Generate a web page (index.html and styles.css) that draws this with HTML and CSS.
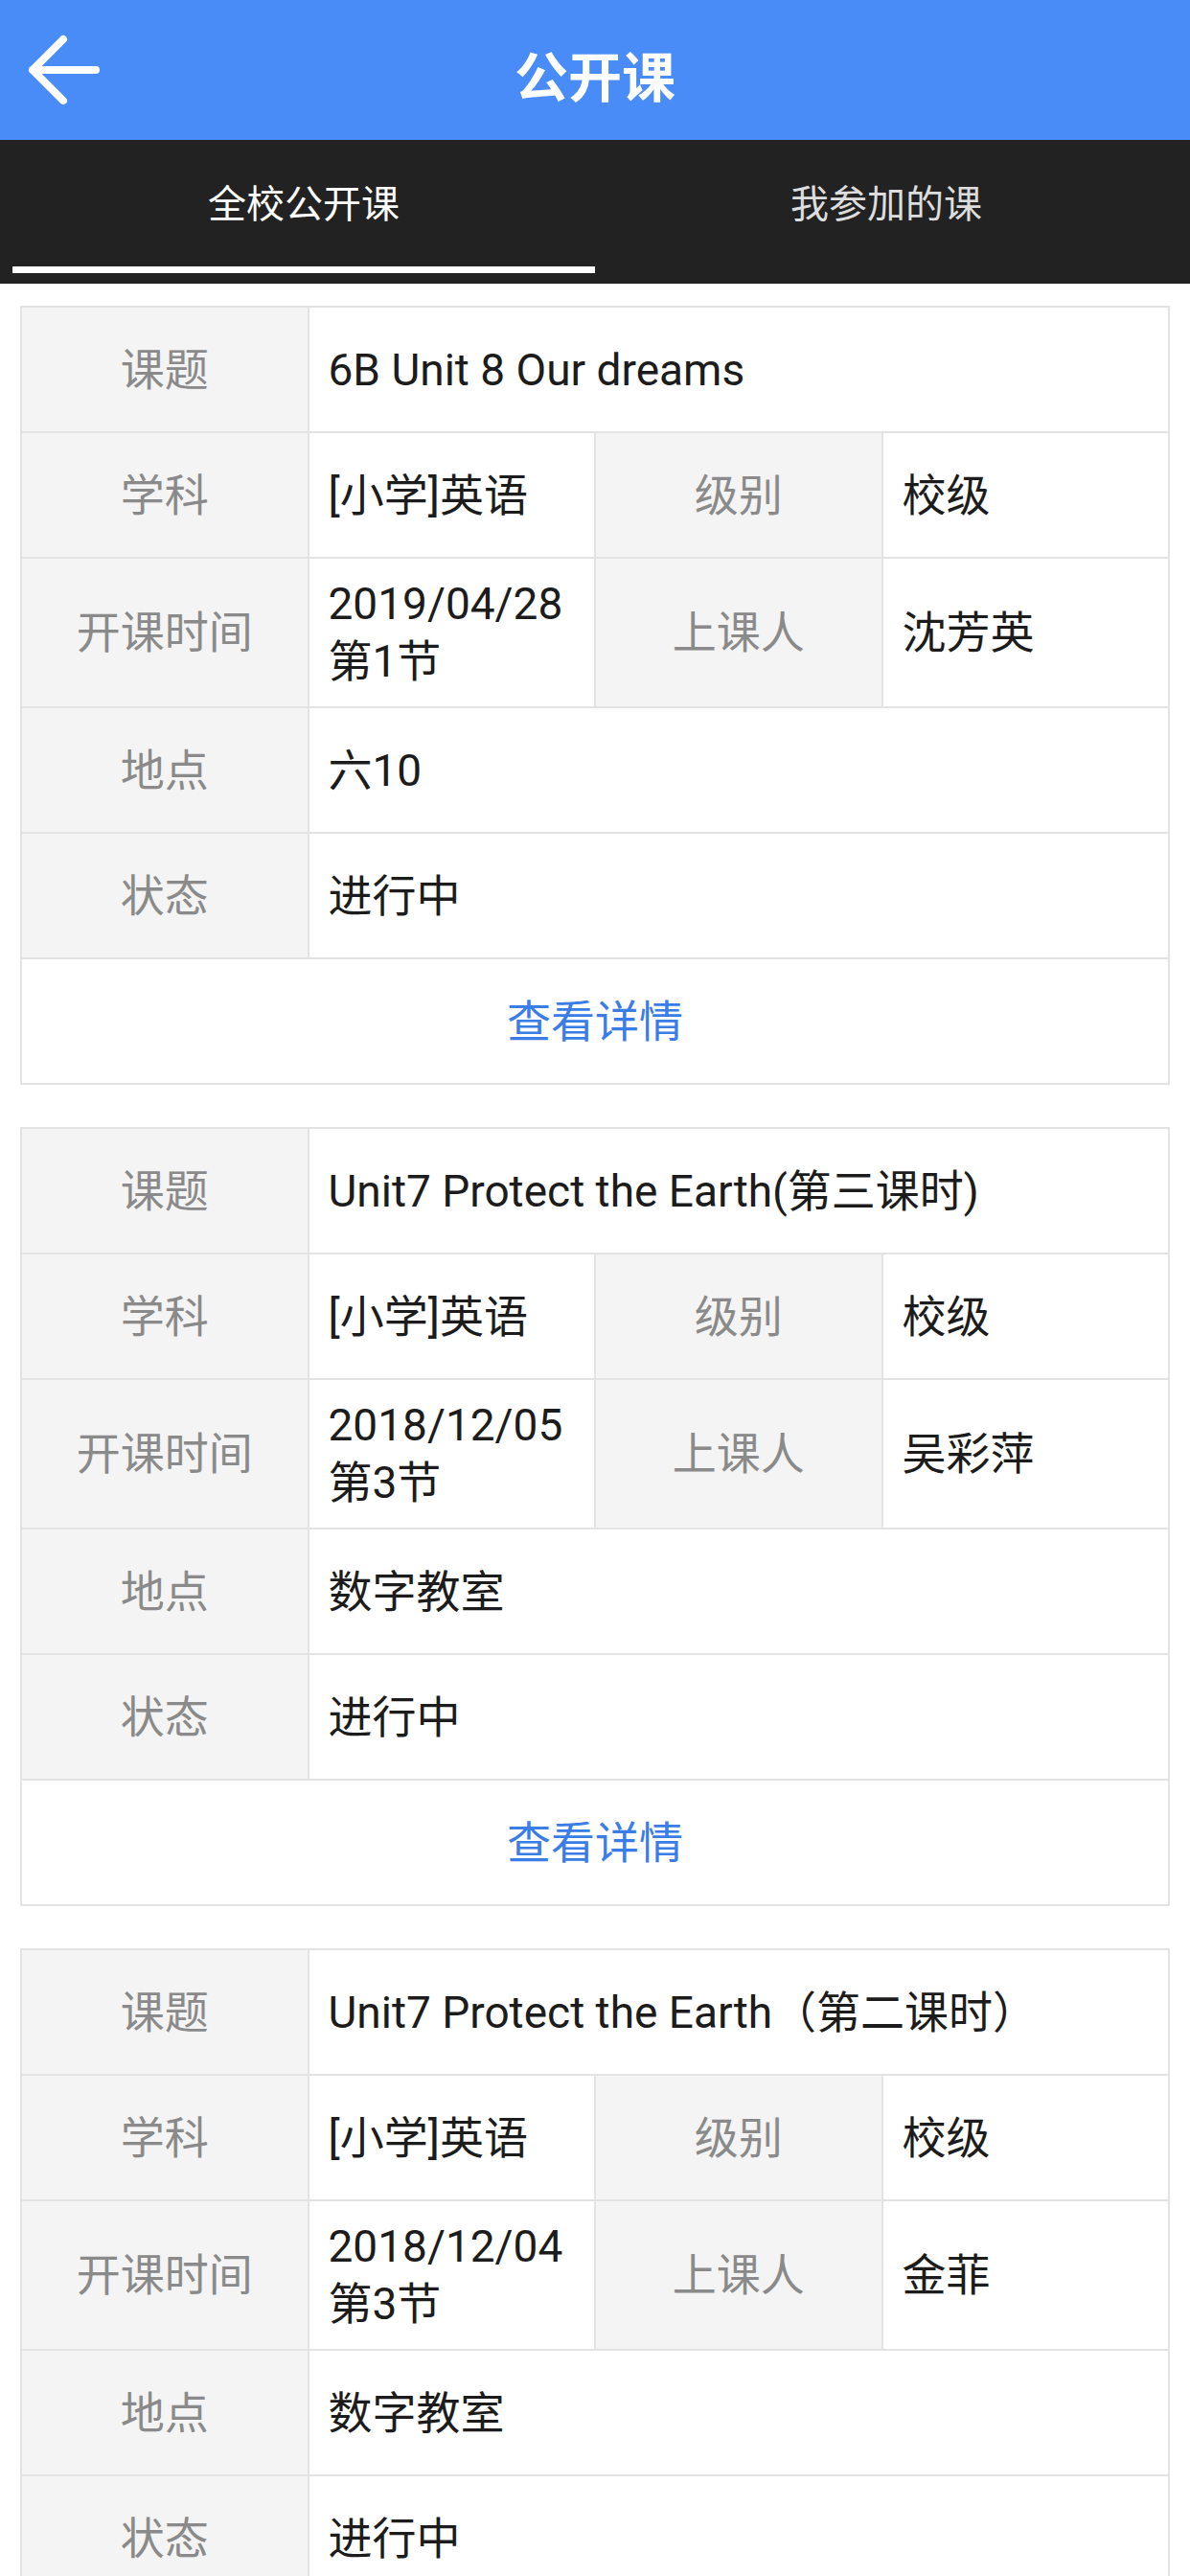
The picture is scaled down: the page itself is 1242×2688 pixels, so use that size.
FILE: index.html
```html
<!DOCTYPE html>
<html lang="zh-CN">
<head>
  <meta charset="UTF-8">
  <meta name="viewport" content="width=device-width, initial-scale=1.0">
  <title>公开课</title>
  <link rel="stylesheet" href="styles.css">
</head>
<body>
  <header class="topbar">
    <a class="back" href="#">
      <svg viewBox="0 0 80 80" width="80" height="80">
        <path d="M8 40 H74 M40 8 L8 40 L40 72" fill="none" stroke="#fff" stroke-width="8" stroke-linecap="round" stroke-linejoin="round"/>
      </svg>
    </a>
    <h1>公开课</h1>
    <span></span>
  </header>

  <nav class="tabs">
    <a class="tab active" href="#">全校公开课</a>
    <a class="tab" href="#">我参加的课</a>
  </nav>

  <main class="list">
    <!-- lesson 1 -->
    <section class="card">
      <div class="label">课题</div>
      <div class="value wide">6B Unit 8 Our dreams</div>
      <div class="label">学科</div>
      <div class="value">[小学]英语</div>
      <div class="label">级别</div>
      <div class="value">校级</div>
      <div class="label">开课时间</div>
      <div class="value">2019/04/28<br>第1节</div>
      <div class="label">上课人</div>
      <div class="value">沈芳英</div>
      <div class="label">地点</div>
      <div class="value wide">六10</div>
      <div class="label">状态</div>
      <div class="value wide">进行中</div>
      <a class="more" href="#">查看详情</a>
    </section>

    <!-- lesson 2 -->
    <section class="card">
      <div class="label">课题</div>
      <div class="value wide">Unit7 Protect the Earth(第三课时)</div>
      <div class="label">学科</div>
      <div class="value">[小学]英语</div>
      <div class="label">级别</div>
      <div class="value">校级</div>
      <div class="label">开课时间</div>
      <div class="value">2018/12/05<br>第3节</div>
      <div class="label">上课人</div>
      <div class="value">吴彩萍</div>
      <div class="label">地点</div>
      <div class="value wide">数字教室</div>
      <div class="label">状态</div>
      <div class="value wide">进行中</div>
      <a class="more" href="#">查看详情</a>
    </section>

    <!-- lesson 3 -->
    <section class="card">
      <div class="label">课题</div>
      <div class="value wide">Unit7 Protect the Earth（第二课时）</div>
      <div class="label">学科</div>
      <div class="value">[小学]英语</div>
      <div class="label">级别</div>
      <div class="value">校级</div>
      <div class="label">开课时间</div>
      <div class="value">2018/12/04<br>第3节</div>
      <div class="label">上课人</div>
      <div class="value">金菲</div>
      <div class="label">地点</div>
      <div class="value wide">数字教室</div>
      <div class="label">状态</div>
      <div class="value wide">进行中</div>
      <a class="more" href="#">查看详情</a>
    </section>
  </main>
</body>
</html>
```

FILE: styles.css
```css
/* Reset */
* {
  margin: 0;
  padding: 0;
  box-sizing: border-box;
}

body {
  font-family: Roboto, "Noto Sans CJK SC", sans-serif;
  background-color: #fff;
  color: #1c1c1c;
  font-size: 46px;
}

a {
  text-decoration: none;
}

/* Top bar */
.topbar {
  height: 146px;
  background-color: #4a8cf7;
  display: grid;
  grid-template-columns: 1fr auto 1fr;
  align-items: center;
}

.back {
  display: flex;
  align-items: center;
  padding-left: 26px;
}

.topbar h1 {
  color: #fff;
  font-size: 56px;
  font-weight: bold;
  padding-top: 6px;
}

/* Tabs */
.tabs {
  height: 150px;
  background-color: #222;
  display: grid;
  grid-template-columns: 1fr 1fr;
}

.tab {
  display: flex;
  align-items: center;
  justify-content: center;
  color: #ddd;
  font-size: 40px;
  padding-bottom: 4px;
  border-bottom: 7px solid transparent;
  margin: 0 13px 11px 0;
}

.tab.active {
  color: #fff;
  border-bottom-color: #fff;
  margin-left: 13px;
  margin-right: 0;
}

/* Lesson cards */
.list {
  padding: 23px 21px;
  display: flex;
  flex-direction: column;
  gap: 44px;
}

.card {
  display: grid;
  grid-template-columns: repeat(4, 1fr);
  gap: 2px;
  background-color: #e3e3e3;
  border: 2px solid #e3e3e3;
}

.label,
.value,
.more {
  min-height: 129px;
  display: flex;
  align-items: center;
  line-height: 60px;
}

.label {
  background-color: #f4f4f4;
  color: #8a8a8a;
  justify-content: center;
}

.value {
  background-color: #fff;
  padding: 17px 20px;
}

.value.wide {
  grid-column: span 3;
}

.more {
  grid-column: span 4;
  background-color: #fff;
  color: #3b7de6;
  justify-content: center;
}
```
